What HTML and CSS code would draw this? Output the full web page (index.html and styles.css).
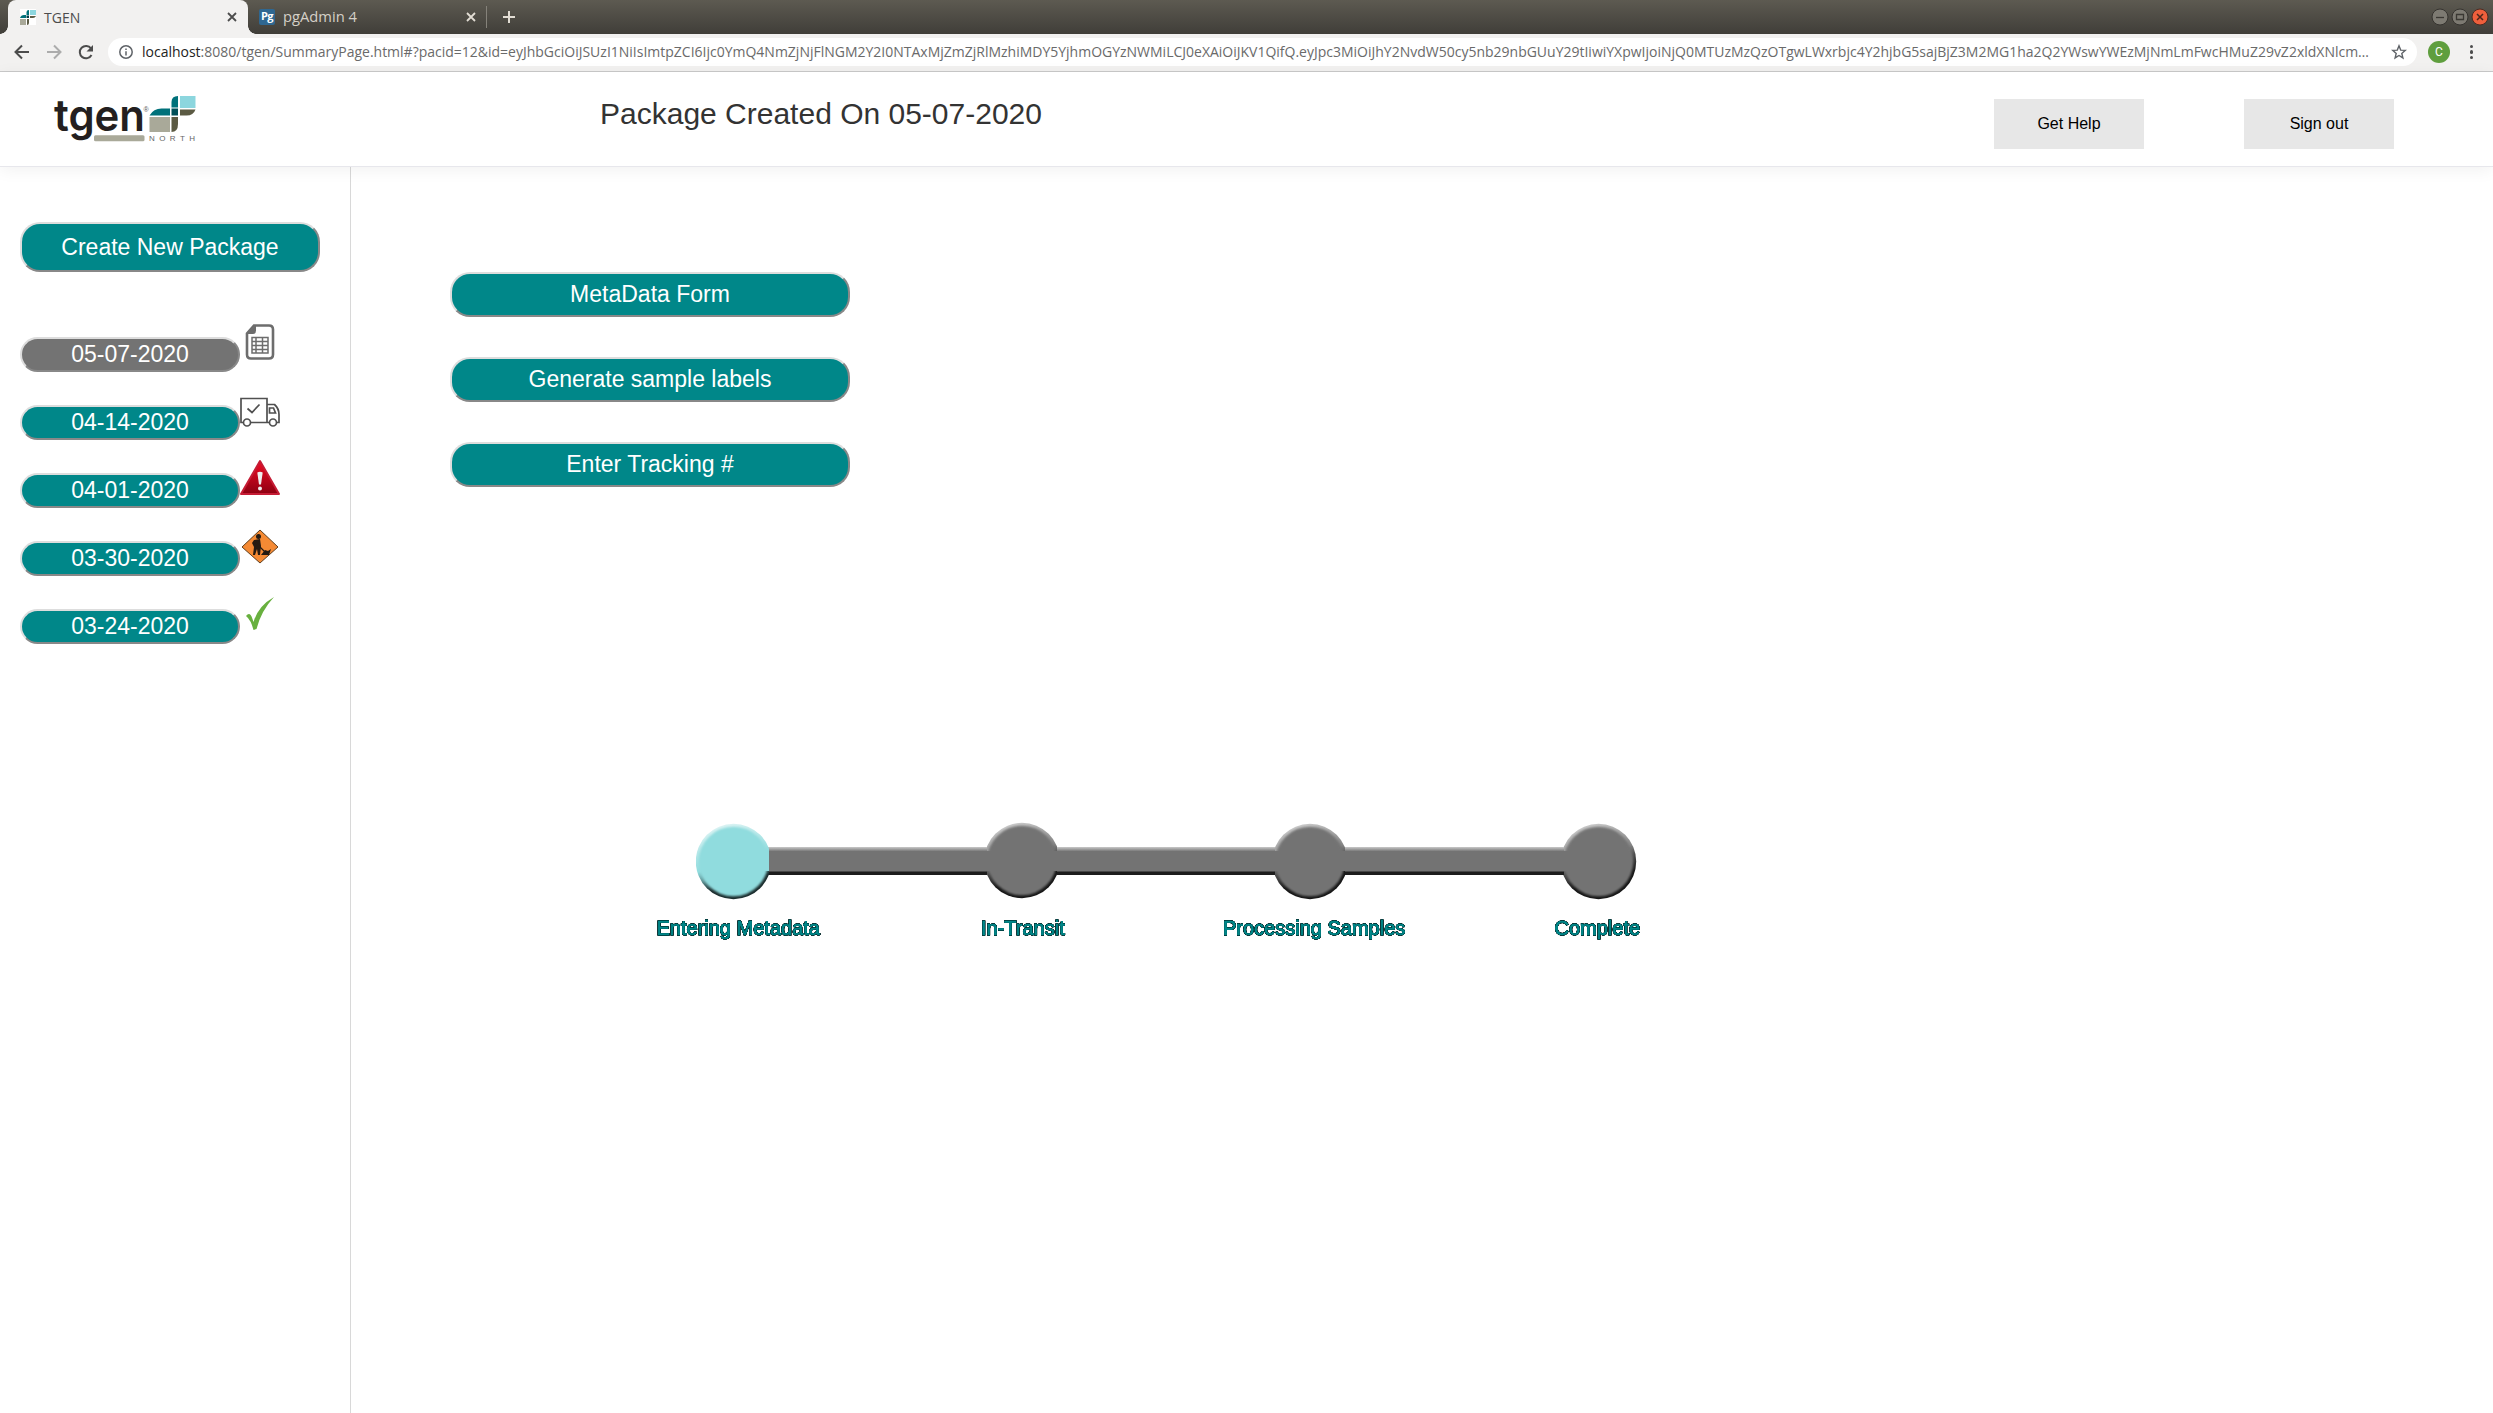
FILE: index.html
```html
<!DOCTYPE html>
<html lang="en">
<head>
<meta charset="utf-8">
<title>TGEN</title>
<link rel="stylesheet" href="styles.css">
</head>
<body>
<div class="tabstrip">
  <div class="tab tab-active">
    <svg class="favicon" viewBox="0 0 16 16"><path fill="#fff" d="M0 0h16v16H0z"/><path fill="#8cd6de" d="M10 1h6v5h-6z"/><path fill="#00717a" d="M6.500 6V3q0-2 2.500-2v5zM0 9q1-3 4-3h2v3z"/><path fill="#a9a999" d="M0 10h6v6H0z"/><path fill="#5b5a43" d="M7 10h2v4q0 2-2 2zM10 7h6q-1 2-3 2h-3z"/><path fill="#003e48" d="M6.500 6.500H9V9H6.500z"/></svg>
    <span class="tab-title">TGEN</span>
    <svg class="close" viewBox="0 0 10 10"><path d="M1 1l8 8M9 1L1 9"/></svg>
  </div>
  <div class="tab tab-idle">
    <span class="pg">Pg</span>
    <span class="tab-title"><svg width="76" height="20"><text x="0" y="15" textLength="74" lengthAdjust="spacingAndGlyphs">pgAdmin 4</text></svg></span>
    <svg class="close" viewBox="0 0 10 10"><path d="M1 1l8 8M9 1L1 9"/></svg>
  </div>
  <svg class="plus" viewBox="0 0 14 14"><path d="M7 1v12M1 7h12"/></svg>
  <div class="window-buttons">
    <svg viewBox="0 0 18 18"><circle cx="9" cy="9" r="8" fill="#7d7a72" stroke="#35332f"/><path d="M5 9.500h8" stroke="#3a3833" stroke-width="1.300"/></svg>
    <svg viewBox="0 0 18 18"><circle cx="9" cy="9" r="8" fill="#7d7a72" stroke="#35332f"/><path d="M5.500 6.500h7v5h-7z" fill="none" stroke="#3a3833" stroke-width="1.300"/></svg>
    <svg viewBox="0 0 18 18"><circle cx="9" cy="9" r="8" fill="#ef5f3c" stroke="#4a2b22"/><path d="M6 6l6 6M12 6l-6 6" stroke="#4b261b" stroke-width="1.500"/></svg>
  </div>
</div>
<div class="toolbar">
  <svg class="nav" viewBox="0 0 16 16"><path d="M15 8H2M8 1.500L1.500 8L8 14.500"/></svg>
  <svg class="nav nav-off" viewBox="0 0 16 16"><path d="M1 8h13M8 1.500L14.500 8L8 14.500"/></svg>
  <svg class="nav" viewBox="0 0 16 16"><path d="M13.500 11A6.200 6.200 0 1 1 13 4.400"/><path class="solid" d="M15 1v6.500H8.500z"/></svg>
  <div class="omnibox">
    <svg class="info" viewBox="0 0 14 14"><circle cx="7" cy="7" r="6.200"/><path d="M7 6.200V10.500M7 3.400v1.600"/></svg>
    <svg class="url" width="2232" height="28"><text x="0" y="19" textLength="2227" lengthAdjust="spacingAndGlyphs"><tspan class="host">localhost</tspan>:8080/tgen/SummaryPage.html#?pacid=12&amp;id=eyJhbGciOiJSUzI1NiIsImtpZCI6Ijc0YmQ4NmZjNjFlNGM2Y2I0NTAxMjZmZjRlMzhiMDY5YjhmOGYzNWMiLCJ0eXAiOiJKV1QifQ.eyJpc3MiOiJhY2NvdW50cy5nb29nbGUuY29tIiwiYXpwIjoiNjQ0MTUzMzQzOTgwLWxrbjc4Y2hjbG5sajBjZ3M2MG1ha2Q2YWswYWEzMjNmLmFwcHMuZ29vZ2xldXNlcm…</text></svg>
    <svg class="star" viewBox="0 0 16 16"><path d="M8 1.800l1.700 4.300 4.600.3-3.500 3 1.100 4.500L8 11.500l-3.900 2.400 1.100-4.500-3.500-3 4.600-.3z"/></svg>
  </div>
  <span class="avatar">C</span>
  <span class="kebab"><i></i><i></i><i></i></span>
</div>
<header class="header">
  <svg class="logo" width="146" height="52" viewBox="52 92 146 52">
    <text class="wordmark" x="54" y="131" textLength="91" lengthAdjust="spacingAndGlyphs">tgen</text>
    <rect x="94" y="135.300" width="50.500" height="6" rx="1.500" fill="#a9a999"/>
    <text x="143.500" y="111.500" font-size="7" fill="#555">®</text>
    <path fill="#8cd6de" d="M180 96h15.500v12H180z"/>
    <path fill="#00717a" d="M171.500 107.500V102q0-6 6.500-6v11.500zM149.500 115.500q4-7 12-7h8.500v7z"/>
    <path fill="#004f58" d="M171.500 108.500h6.500v7h-6.500z"/>
    <path fill="#5b5a43" d="M180 109.500h15.500q-2 6-9 6H180zM171.500 117h6.500v7q0 8-6.500 8z"/>
    <path fill="#a9a999" d="M149.500 117H170v15h-20.500z"/>
    <text class="north" x="149" y="141" textLength="46">NORTH</text>
  </svg>
  <h1 class="title">Package Created On 05-07-2020</h1>
  <div class="actions"><button class="flat">Get Help</button><button class="flat">Sign out</button></div>
</header>
<div class="page">
  <nav class="sidebar">
    <button class="pill pill-create">Create New Package</button>
    <div class="packages">
      <div class="row"><button class="pill pill-date pill-selected">05-07-2020</button>
        <svg class="status" viewBox="0 0 40 40"><path d="M14 3.500h15q4 0 4 4v25q0 4-4 4H11q-4 0-4-4v-21z" fill="#fff" stroke="#6d6d6d" stroke-width="2.600"/><path fill="#6d6d6d" d="M7 12L15 3.500h1v5q0 3.500-3 3.500z"/><path fill="none" stroke="#6d6d6d" stroke-width="1.500" d="M12 15.500h16V31H12zM12 19.500h16M12 23.500h16M12 27.500h16M16 15.500V31M22.500 15.500V31"/></svg></div>
      <div class="row"><button class="pill pill-date">04-14-2020</button>
        <svg class="status" viewBox="0 0 40 40"><g fill="#fff" stroke="#505050" stroke-width="1.700"><path d="M1 8.500h26v24H1zM27 14.500h7.500q4.500 4 4.500 10v8H27z"/><path d="M29.500 18h4l2 5h-6zM7.500 18.500l4.500 4 7.500-8" fill="none"/><circle cx="7" cy="32.500" r="3.500"/><circle cx="33" cy="32.500" r="3.500"/></g></svg></div>
      <div class="row"><button class="pill pill-date">04-01-2020</button>
        <svg class="status" viewBox="0 0 40 40"><defs><linearGradient id="red" x2="0" y2="1"><stop stop-color="#ee0c24"/><stop offset="1" stop-color="#8d0012"/></linearGradient></defs><path d="M20 3L39 36H1z" fill="url(#red)" stroke="#c51c35" stroke-width="2" stroke-linejoin="round"/><path fill="#eee" d="M17.300 14.500q2.700-1.500 5.400 0l-1.700 12h-2z"/><circle cx="20" cy="30.500" r="2" fill="#eee"/></svg></div>
      <div class="row"><button class="pill pill-date">03-30-2020</button>
        <svg class="status" viewBox="0 -2 40 40"><path d="M20 2l18 17-18 16L2 19z" fill="#f58a34" stroke="#60401f" stroke-linejoin="round"/><g fill="#241a12"><circle cx="18.500" cy="8.500" r="2.500"/><path d="M14 12l6-1 1 7-1 9h-2l-1-6-2 6h-2l1-8-2-4zM21 27l4-5 3 1 3-2-2 6z"/></g><path d="M16 15l9 9" stroke="#241a12" stroke-width="1.300"/></svg></div>
      <div class="row"><button class="pill pill-date">03-24-2020</button>
        <svg class="status" viewBox="0 -2 40 40"><path fill="#68b03f" d="M6 20q4-5 6.500 3l1 3Q18 10 34 1 21 15 16.500 33l-3 1Q11 24 6 20z"/></svg></div>
    </div>
  </nav>
  <main class="content">
    <div class="steps">
      <button class="pill pill-step">MetaData Form</button>
      <button class="pill pill-step">Generate sample labels</button>
      <button class="pill pill-step">Enter Tracking #</button>
    </div>
    <svg class="progress" width="1000" height="130" viewBox="650 820 1000 130">
      <defs>
        <linearGradient id="barTop" x2="0" y2="1"><stop stop-color="#c9c9c9"/><stop offset=".16" stop-color="#737373"/><stop offset=".84" stop-color="#737373"/><stop offset=".91" stop-color="#1c1c1c"/><stop offset="1" stop-color="#1c1c1c"/></linearGradient>
        <linearGradient id="rim" x1=".35" x2=".65" y1="0" y2="1"><stop stop-color="#cdcdcd"/><stop offset=".42" stop-color="#858585"/><stop offset=".55" stop-color="#4a4a4a"/><stop offset=".75" stop-color="#161616"/></linearGradient>
        <linearGradient id="rimBlue" x1=".35" x2=".65" y1="0" y2="1"><stop stop-color="#def4f4"/><stop offset=".5" stop-color="#90dcde"/><stop offset=".62" stop-color="#62989a"/><stop offset=".78" stop-color="#1a2b2c"/></linearGradient>
        <filter id="soft" x="-10%" y="-10%" width="120%" height="120%"><feGaussianBlur stdDeviation=".9"/></filter>
        <clipPath id="first"><path d="M696 820h73v85h-73z"/></clipPath>
      </defs>
      <circle cx="1022" cy="860.500" r="37.700" fill="url(#rim)"/>
      <circle cx="1310" cy="861.500" r="37.700" fill="url(#rim)"/>
      <circle cx="1598.500" cy="861.500" r="37.700" fill="url(#rim)"/>
      <path fill="url(#barTop)" d="M765 847h222v28H765zM1057 847h218v28h-218zM1345 847h219v28h-219z"/>
      <g fill="#737373" filter="url(#soft)"><circle cx="1022" cy="860.500" r="34.800"/><circle cx="1310" cy="861.500" r="34.800"/><circle cx="1598.500" cy="861.500" r="34.800"/></g>
      <path fill="#737373" d="M980 851h84v20h-84zM1268 851h84v20h-84zM1556 851h40v20h-40z"/>
      <g clip-path="url(#first)"><circle cx="733.500" cy="861.500" r="37.700" fill="url(#rimBlue)"/><circle cx="733.500" cy="861.500" r="34.800" fill="#90dcde" filter="url(#soft)"/><path fill="#90dcde" d="M755 850h14v21h-14z"/></g>
      <g class="step-label"><text x="656.500" y="935">Entering Metadata</text><text x="981" y="935">In-Transit</text><text x="1223" y="935">Processing Samples</text><text x="1554.500" y="935">Complete</text></g>
    </svg>
  </main>
</div>
</body>
</html>
```
FILE: styles.css
```css
* { box-sizing: border-box; }
body { margin: 0; height: 1413px; display: flex; flex-direction: column; overflow: hidden; background: #fff; font-family: "Liberation Sans", Arial, sans-serif; }
button { font-family: inherit; margin: 0; padding: 0; }
svg { display: block; flex: none; }

.tabstrip { height: 34px; flex: none; display: flex; align-items: center; padding-left: 8px; background: linear-gradient(#5d5a51, #403e39); font: 14px "Open Sans", "Noto Sans", sans-serif; }
.tab { height: 34px; display: flex; align-items: center; padding: 0 11px; flex: none; }
.tab-active { position: relative; width: 240px; padding-left: 12px; background: #f2f1f0; border-radius: 8px 8px 0 0; color: #4c4c4c; }
.tab-active::before, .tab-active::after { content: ""; position: absolute; bottom: 0; width: 8px; height: 8px; }
.tab-active::before { left: -8px; background: radial-gradient(circle at 0 0, transparent 7.5px, #f2f1f0 8px); }
.tab-active::after { right: -8px; background: radial-gradient(circle at 100% 0, transparent 7.5px, #f2f1f0 8px); }
.tab-idle { width: 239px; padding-right: 10px; border-right: 1px solid transparent; border-image: linear-gradient(transparent 7px, #85827a 7px, #85827a 27px, transparent 27px) 1; }
.tab-title { margin-left: 8px; flex: 1; }
.tab-title text { fill: #d5d0c7; font-size: 14px; }
.favicon { width: 16px; height: 16px; }
.pg { width: 16px; height: 16px; border-radius: 2px; background: #2f6791; color: #fff; font: bold 11px/14px "Open Sans", sans-serif; text-align: center; letter-spacing: -.5px; }
.close { width: 10px; height: 10px; fill: none; stroke: #4c4c4c; stroke-width: 1.8; }
.tab-idle .close, .plus { stroke: #e2ddd4; }
.plus { width: 14px; height: 14px; margin-left: 15px; stroke-width: 2; }
.window-buttons { margin-left: auto; margin-right: 4px; display: flex; gap: 2px; }
.window-buttons svg { width: 18px; height: 18px; }

.toolbar { height: 38px; flex: none; display: flex; align-items: center; padding: 0 18px 1px 14px; background: #f2f1f0; border-bottom: 1px solid #c9c9c9; }
.nav { width: 16px; height: 16px; margin-right: 16px; fill: none; stroke: #4c4c4c; stroke-width: 2; }
.nav-off { stroke: #acacac; }
.nav:nth-child(3) { margin-right: 14px; }
.nav .solid { fill: #4c4c4c; stroke: none; }
.omnibox { width: 2309px; height: 28px; border-radius: 14px; background: #fff; display: flex; align-items: center; padding-left: 11px; }
.info { width: 14px; height: 14px; fill: none; stroke: #5f6368; stroke-width: 1.5; }
.url { margin-left: 9px; font: 14px "Open Sans", "Noto Sans", sans-serif; fill: #6a6a6a; }
.host { fill: #222; }
.star { width: 16px; height: 16px; margin-left: 17px; fill: none; stroke: #5f6368; stroke-width: 1.4; }
.avatar { width: 22px; height: 22px; margin-left: 11px; border-radius: 50%; background: #5f9e3e; color: #fff; font: 12px/22px Roboto, sans-serif; text-align: center; }
.kebab { margin-left: auto; margin-right: 2px; display: flex; flex-direction: column; gap: 2px; }
.kebab i { width: 3.4px; height: 3.4px; border-radius: 50%; background: #4c4c4c; }

.header { position: relative; height: 95px; flex: none; display: flex; align-items: flex-start; padding-left: 52px; background: #fff; border-bottom: 1px solid #e7e7ec; box-shadow: 0 3px 16px rgba(0, 0, 0, .06); }
.logo { margin-top: 20px; overflow: visible; }
.wordmark { font: 600 44px Inter, "Liberation Sans", sans-serif; fill: #231f20; }
.north { font: 8px "Liberation Sans", sans-serif; fill: #666; }
.title { margin: 25px 0 0 402px; font-size: 30px; font-weight: 400; line-height: 34px; color: #333; }
.actions { display: flex; gap: 100px; margin: 27px 99px 0 auto; }
.flat { width: 150px; height: 50px; border: 0; background: #e7e7e7; color: #000; font-size: 16px; }

.page { flex: 1; display: flex; }
.sidebar { width: 351px; flex: none; border-right: 1px solid #d8d8d8; padding: 55px 0 0 20px; }
.pill { display: block; flex: none; border: 2px solid; border-color: #ddd #888 #888 #ddd; background: #008789; color: #fff; font-size: 23px; line-height: 26px; border-radius: 20px; }
.pill-create { width: 300px; height: 50px; }
.packages { display: flex; flex-direction: column; gap: 28px; margin-top: 50px; }
.row { display: flex; height: 40px; align-items: flex-start; }
.pill-date { width: 220px; height: 35px; margin-top: 15px; padding-bottom: 1px; }
.pill-selected { background: #737373; }
.status { width: 40px; height: 40px; }

.content { flex: 1; padding: 105px 0 0 99px; }
.steps { display: flex; flex-direction: column; gap: 40px; }
.pill-step { width: 400px; height: 45px; padding-bottom: 1px; }
.progress { margin: 333px 0 0 200px; }
.step-label { filter: drop-shadow(0 0 .7px #000) drop-shadow(0 0 .6px #000) drop-shadow(0 0 .3px #000); }
.step-label text { font-size: 20px; fill: #008789; stroke: #008789; stroke-width: .8px; }
```
